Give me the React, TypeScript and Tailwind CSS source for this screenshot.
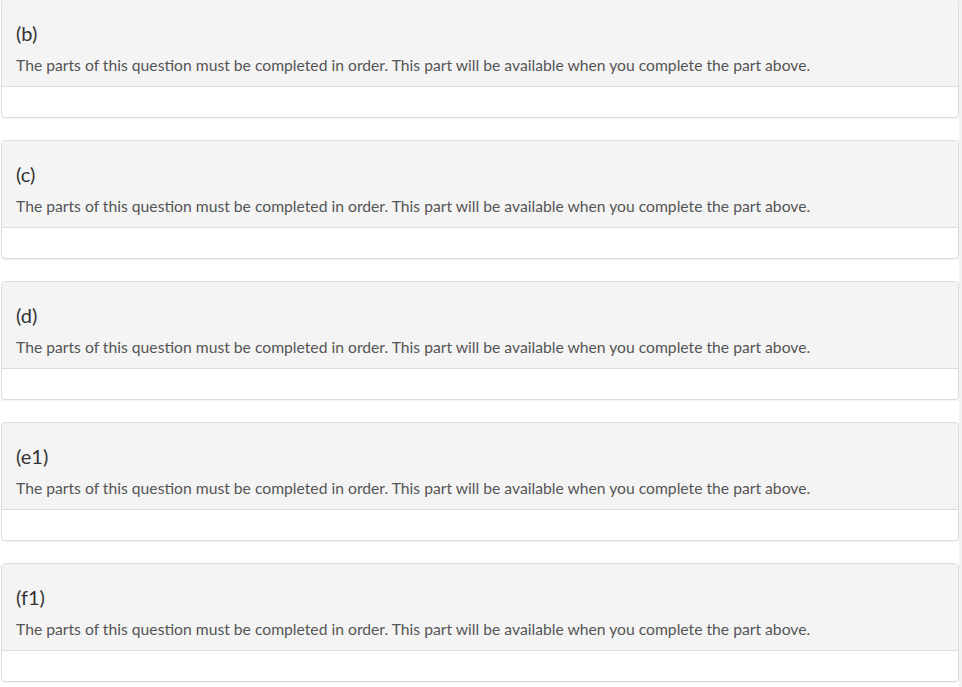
const parts = ["(b)", "(c)", "(d)", "(e1)", "(f1)"];

const note =
  "The parts of this question must be completed in order. This part will be available when you complete the part above.";

export default function App() {
  return (
    <div className="flex w-[962px] h-[687px] overflow-hidden bg-white" style={{ fontFamily: "Lato, 'Open Sans', sans-serif" }}>
      <div className="flex-1 flex flex-col gap-[22px] pl-px -mt-px">
        {parts.map((p) => (
          <div
            key={p}
            className="flex flex-col rounded-[4px] border border-[#dcdcdc] bg-white shadow-[0_1px_1px_rgba(0,0,0,0.05)]"
          >
            <div className="bg-[#f4f4f4] border-b border-[#dcdcdc] rounded-t-[4px] pl-[14px] pr-4 pt-[20px] pb-[9px]">
              <div className="text-[20px] leading-[26px] text-[#333]">{p}</div>
              <div className="mt-[7px] text-[15.7px] leading-[24px] text-[#555]">{note}</div>
            </div>
            <div className="h-[30px]" />
          </div>
        ))}
      </div>
      <div className="w-[3px] bg-[#f2f2f2]" />
    </div>
  );
}
